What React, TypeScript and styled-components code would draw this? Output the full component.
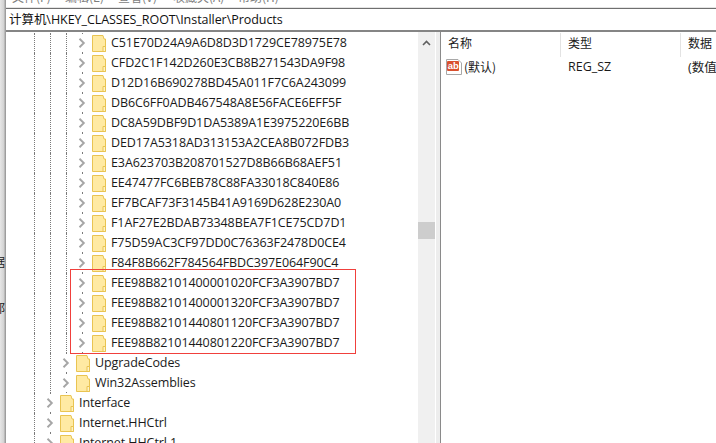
import React from "react";
import styled, { createGlobalStyle } from "styled-components";

const GlobalStyle = createGlobalStyle`
  html, body {
    margin: 0;
    padding: 0;
    height: 443px;
    overflow: hidden;
    background: #fff;
  }
  body {
    font-family: "Open Sans", "Noto Sans CJK SC", sans-serif;
  }
`;

const Page = styled.div`
  display: flex;
  width: 716px;
  height: 443px;
  overflow: hidden;
`;

const BackWindow = styled.div`
  width: 6px;
  flex: none;
  overflow: hidden;
  background: linear-gradient(to right, #e6e6e6, #d4d4d4 60%, #8f8f8f);
`;

const BackGlyph = styled.div<{ $top: number }>`
  margin-top: ${(p) => p.$top}px;
  margin-left: -7px;
  height: 14px;
  line-height: 14px;
  font-size: 12px;
  color: #222;
  white-space: nowrap;
  font-family: "Noto Sans CJK SC", sans-serif;
`;

const Window = styled.div`
  flex: 1;
  min-width: 0;
  display: flex;
  flex-direction: column;
`;

const MenuBar = styled.div`
  height: 8px;
  flex: none;
  overflow: hidden;
  background: #fff;
  border-bottom: 1px solid #e4e4e4;
  box-sizing: border-box;
  display: flex;
`;

const MenuItem = styled.span<{ $width: number }>`
  width: ${(p) => p.$width}px;
  margin-top: -11px;
  line-height: 16px;
  font-size: 12px;
  color: #7d7d7d;
  white-space: nowrap;
  font-family: "Noto Sans CJK SC", sans-serif;
  &:first-child {
    margin-left: 6px;
  }
`;

const AddressBar = styled.div`
  height: 24px;
  flex: none;
  box-sizing: border-box;
  border-top: 1px solid #6f6f6f;
  border-bottom: 2px solid #858585;
  padding-left: 3px;
  padding-bottom: 2px;
  display: flex;
  align-items: center;
  font-size: 12.5px;
  letter-spacing: -0.05px;
  color: #111;
  white-space: nowrap;
`;

const Body = styled.div`
  flex: 1;
  min-height: 0;
  display: flex;
`;

const TreePane = styled.div`
  position: relative;
  width: 412px;
  flex: none;
  overflow: hidden;
  padding-top: 1px;
  padding-left: 20px;
  box-sizing: border-box;
`;

const Row = styled.div`
  display: flex;
  height: 20px;
  align-items: center;
`;

const Cell = styled.div`
  position: relative;
  width: 16px;
  height: 20px;
  flex: none;
  display: flex;
  align-items: center;
  justify-content: center;
  &::before {
    content: "";
    position: absolute;
    left: 8px;
    top: 0;
    bottom: 0;
    border-left: 1px dotted #7a7a7a;
  }
`;

const ChevronIcon = styled.svg`
  position: relative;
  background: #fff;
  padding: 2px 0;
  display: block;
`;

const FolderIcon = styled.svg`
  flex: none;
  margin-left: 2px;
  display: block;
`;

const RowLabel = styled.span`
  margin-left: 5px;
  padding-bottom: 2px;
  font-size: 12.5px;
  letter-spacing: -0.09px;
  color: #1a1a1a;
  white-space: nowrap;
`;

const Highlight = styled.div`
  position: absolute;
  left: 64px;
  top: 237px;
  width: 284px;
  height: 83px;
  border: 1px solid #f0403c;
  pointer-events: none;
`;

const ScrollBar = styled.div`
  width: 17px;
  flex: none;
  background: #f0f0f0;
  display: flex;
  flex-direction: column;
  align-items: center;
`;

const ScrollArrow = styled.svg`
  margin-top: 8px;
  display: block;
`;

const ScrollThumb = styled.div`
  width: 100%;
  height: 17px;
  margin-top: 176px;
  background: #cdcdcd;
`;

const Splitter = styled.div`
  width: 6px;
  flex: none;
  box-sizing: border-box;
  background: #ededed;
  border-left: 1px solid #fff;
  border-right: 1px solid #8a8a8a;
`;

const ListPane = styled.div`
  flex: 1;
  min-width: 0;
  overflow: hidden;
`;

const ListRow = styled.div<{ $header?: boolean }>`
  display: grid;
  grid-template-columns: 120px 120px 120px;
  height: ${(p) => (p.$header ? 25 : 20)}px;
  align-items: center;
  font-size: 12px;
  color: #1a1a1a;
  white-space: nowrap;
  font-family: "Noto Sans CJK SC", sans-serif;
`;

const HeaderCell = styled.div`
  height: 24px;
  box-sizing: border-box;
  padding-left: 7px;
  padding-bottom: 4px;
  display: flex;
  align-items: center;
  border-right: 1px solid #e3e3e3;
`;

const NameCell = styled.div`
  display: flex;
  align-items: center;
  padding-left: 5px;
  gap: 2px;
  padding-bottom: 2px;
`;

const ValueCell = styled.div`
  padding-left: 7px;
  padding-bottom: 2px;
  font-family: "Open Sans", "Noto Sans CJK SC", sans-serif;
  font-size: 12.5px;
`;

const AbText = styled.text`
  font-family: "Liberation Sans", sans-serif;
  font-size: 9.5px;
  font-weight: bold;
  fill: #fff;
`;

const Chevron = () => (
  <ChevronIcon width="8" height="14" viewBox="0 0 8 10">
    <path d="M1.5 .8 L5.8 5 L1.5 9.2" fill="none" stroke="#a6a6a6" strokeWidth="1.9" />
  </ChevronIcon>
);

const Folder = () => (
  <FolderIcon width="14" height="17" viewBox="0 0 14 17">
    <path d="M.5 .5 H11 L12 4 H13.5 V16.5 H.5 Z" fill="#ffeaa3" stroke="#e9c452" />
    <path d="M11 11.5 H13.5 V16.5 H11 Z" fill="#fff3c4" stroke="#e9c452" />
  </FolderIcon>
);

const TreeRow = ({ depth, label }: { depth: number; label: string }) => (
  <Row>
    {Array.from({ length: depth }, (_, i) => (
      <Cell key={i} />
    ))}
    <Cell>
      <Chevron />
    </Cell>
    <Folder />
    <RowLabel>{label}</RowLabel>
  </Row>
);

const keys = [
  "C51E70D24A9A6D8D3D1729CE78975E78",
  "CFD2C1F142D260E3CB8B271543DA9F98",
  "D12D16B690278BD45A011F7C6A243099",
  "DB6C6FF0ADB467548A8E56FACE6EFF5F",
  "DC8A59DBF9D1DA5389A1E3975220E6BB",
  "DED17A5318AD313153A2CEA8B072FDB3",
  "E3A623703B208701527D8B66B68AEF51",
  "EE47477FC6BEB78C88FA33018C840E86",
  "EF7BCAF73F3145B41A9169D628E230A0",
  "F1AF27E2BDAB73348BEA7F1CE75CD7D1",
  "F75D59AC3CF97DD0C76363F2478D0CE4",
  "F84F8B662F784564FBDC397E064F90C4",
  "FEE98B82101400001020FCF3A3907BD7",
  "FEE98B82101400001320FCF3A3907BD7",
  "FEE98B82101440801120FCF3A3907BD7",
  "FEE98B82101440801220FCF3A3907BD7",
];

const App = () => {
  return (
    <Page>
      <GlobalStyle />
      <BackWindow>
        <BackGlyph $top={255}>据</BackGlyph>
        <BackGlyph $top={32}>郭</BackGlyph>
      </BackWindow>
      <Window>
        <MenuBar>
          <MenuItem $width={53}>文件(F)</MenuItem>
          <MenuItem $width={53}>编辑(E)</MenuItem>
          <MenuItem $width={55}>查看(V)</MenuItem>
          <MenuItem $width={65}>收藏夹(A)</MenuItem>
          <MenuItem $width={53}>帮助(H)</MenuItem>
        </MenuBar>
        <AddressBar>计算机\HKEY_CLASSES_ROOT\Installer\Products</AddressBar>
        <Body>
          <TreePane>
            {keys.map((k) => (
              <TreeRow key={k} depth={3} label={k} />
            ))}
            <TreeRow depth={2} label="UpgradeCodes" />
            <TreeRow depth={2} label="Win32Assemblies" />
            <TreeRow depth={1} label="Interface" />
            <TreeRow depth={1} label="Internet.HHCtrl" />
            <TreeRow depth={1} label="Internet.HHCtrl.1" />
            <Highlight />
          </TreePane>
          <ScrollBar>
            <ScrollArrow width="9" height="6" viewBox="0 0 9 6">
              <path d="M1 5 L4.5 1.5 L8 5" fill="none" stroke="#606060" strokeWidth="1.6" />
            </ScrollArrow>
            <ScrollThumb />
          </ScrollBar>
          <Splitter />
          <ListPane>
            <ListRow $header>
              <HeaderCell>名称</HeaderCell>
              <HeaderCell>类型</HeaderCell>
              <HeaderCell>数据</HeaderCell>
            </ListRow>
            <ListRow>
              <NameCell>
                <svg width="16" height="16" viewBox="0 0 16 16">
                  <path d="M.5 .5 H12 L15.5 4 V15.5 H.5 Z" fill="#fff" stroke="#a8a8a8" />
                  <rect x="1" y="2" width="12" height="10" rx="1" fill="#d9502e" />
                  <AbText x="1.8" y="10">ab</AbText>
                </svg>
                <span>(默认)</span>
              </NameCell>
              <ValueCell>REG_SZ</ValueCell>
              <ValueCell>(数值</ValueCell>
            </ListRow>
          </ListPane>
        </Body>
      </Window>
    </Page>
  );
};

export default App;
